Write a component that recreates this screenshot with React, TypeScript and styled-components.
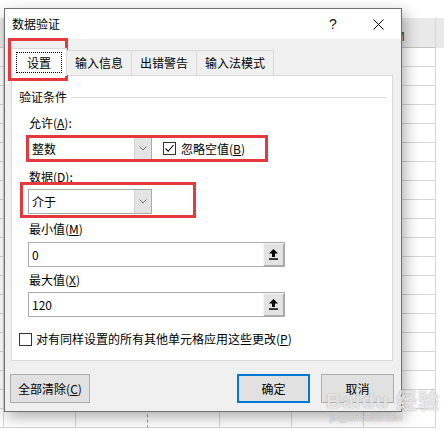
import React from "react";
import styled, { createGlobalStyle } from "styled-components";

const GlobalStyle = createGlobalStyle`
  html, body { margin: 0; padding: 0; background: #fff; }
  body {
    font-family: "Noto Sans CJK SC", "Microsoft YaHei", sans-serif;
    font-size: 12px;
    color: #000;
  }
  * { box-sizing: border-box; }
`;

const Screen = styled.div`
  position: relative;
  width: 444px;
  height: 431px;
  overflow: hidden;
  background: #fff;
`;

/* ---------- spreadsheet behind the dialog ---------- */
const Sheet = styled.div`
  padding-top: 18px;
  display: flex;
  flex-direction: column;
`;

const SheetRow = styled.div<{ $header?: boolean }>`
  display: grid;
  grid-template-columns: repeat(7, 72px);
  margin-left: -68px;
  height: ${(p) => (p.$header ? "30px" : "19px")};
  background: ${(p) => (p.$header ? "#e9e9e9" : "#fff")};
`;

const Cell = styled.div<{ $header?: boolean; $dashed?: boolean }>`
  border-right: 1px ${(p) => (p.$dashed ? "dashed #9a9a9a" : "solid #d6d6d6")};
  border-bottom: 1px solid ${(p) => (p.$header ? "#c4c4c4" : "#d6d6d6")};
  display: flex;
  align-items: flex-end;
  justify-content: center;
  padding-bottom: 3px;
  font: 13px "Liberation Sans", Arial, sans-serif;
  color: #444;
`;

/* ---------- dialog window ---------- */
const Dialog = styled.div`
  position: absolute;
  left: 4px;
  top: 8px;
  width: 398px;
  height: 404px;
  border: 1px solid #707070;
  background: #f0f0f0;
  box-shadow: 3px 5px 14px rgba(0, 0, 0, 0.32);
  display: flex;
  flex-direction: column;
`;

const TitleBar = styled.div`
  height: 30px;
  background: #fff;
  display: flex;
  align-items: center;
  padding-left: 7px;
`;

const Title = styled.div`
  flex: 1;
  font-size: 12px;
  line-height: 16px;
`;

const HelpButton = styled.div`
  width: 30px;
  margin-right: 7px;
  text-align: center;
  font: 14px "Liberation Sans", Arial, sans-serif;
  color: #111;
`;

const CloseButton = styled.div`
  width: 46px;
  height: 30px;
  display: flex;
  align-items: center;
  justify-content: center;
`;

const Body = styled.div`
  flex: 1;
  display: flex;
  flex-direction: column;
  padding: 9px 0 0 6px;
`;

const TabStrip = styled.div`
  display: flex;
  align-items: flex-end;
  height: 28px;
  position: relative;
  z-index: 1;
  margin-bottom: -1px;
`;

const Tab = styled.div<{ $active?: boolean }>`
  height: ${(p) => (p.$active ? "28px" : "25px")};
  margin-bottom: ${(p) => (p.$active ? "0" : "1px")};
  margin-left: -1px;
  border: 1px solid #d9d9d9;
  border-bottom: none;
  background: ${(p) => (p.$active ? "#fff" : "#f0f0f0")};
  padding: ${(p) => (p.$active ? "3px 4px 0 4px" : "0 8px")};
  line-height: 23px;
  font-size: 12px;
  &:first-child { margin-left: 0; }
`;

const FocusRect = styled.div`
  border: 1px dotted #000;
  height: 21px;
  padding: 0 10px;
  line-height: 19px;
`;

const Panel = styled.div`
  width: 382px;
  height: 286px;
  background: #fff;
  border: 1px solid #d9d9d9;
  padding: 13px 0 0 7px;
  display: flex;
  flex-direction: column;
`;

const GroupHeader = styled.div`
  display: flex;
  align-items: center;
  height: 16px;
  line-height: 16px;
`;

const GroupLine = styled.div`
  flex: 1;
  height: 1px;
  background: #dcdcdc;
  margin: 0 6px 0 4px;
`;

const Fields = styled.div`
  display: flex;
  flex-direction: column;
  padding-left: 9px;
`;

const FieldLabel = styled.div<{ $mt: number }>`
  margin-top: ${(p) => p.$mt}px;
  height: 16px;
  line-height: 16px;
  padding-left: 1px;
`;

const Row = styled.div<{ $mt: number }>`
  margin-top: ${(p) => p.$mt}px;
  display: flex;
  align-items: center;
`;

const Combo = styled.div`
  width: 124px;
  height: 25px;
  border: 1px solid #ababab;
  background: #fff;
  display: flex;
`;

const ComboText = styled.div`
  flex: 1;
  padding-left: 3px;
  line-height: 23px;
`;

const DropButton = styled.div`
  width: 17px;
  background: #e4e4e4;
  border-left: 1px solid #d0d0d0;
  display: flex;
  align-items: center;
  justify-content: center;
`;

const CheckItem = styled.div<{ $ml: number }>`
  margin-left: ${(p) => p.$ml}px;
  display: flex;
  align-items: center;
  gap: 5px;
  line-height: 16px;
`;

const CheckBox = styled.div`
  width: 13px;
  height: 13px;
  border: 1px solid #333;
  background: #fff;
  display: flex;
  align-items: center;
  justify-content: center;
`;

const CheckText = styled.span`
  white-space: nowrap;
`;

const RangeInput = styled.div`
  width: 257px;
  height: 25px;
  border: 1px solid #ababab;
  background: #fff;
  display: flex;
`;

const InputText = styled.div`
  flex: 1;
  padding-left: 3px;
  line-height: 23px;
`;

const RangeButton = styled.div`
  width: 21px;
  background: #e3e3e3;
  box-shadow: inset 1px 1px #f4f4f4, inset -1px -1px #a9a9a9;
  display: flex;
  align-items: center;
  justify-content: center;
`;

const BottomCheck = styled.div`
  margin-top: 14px;
  display: flex;
  align-items: center;
  gap: 4px;
  line-height: 16px;
`;

const ButtonRow = styled.div`
  margin-top: 13px;
  margin-left: -1px;
  padding-right: 7px;
  display: flex;
  justify-content: space-between;
`;

const ButtonGroup = styled.div`
  display: flex;
  gap: 11px;
`;

const Button = styled.div<{ $w: number; $primary?: boolean }>`
  width: ${(p) => p.$w}px;
  height: 29px;
  background: #e1e1e1;
  border: ${(p) => (p.$primary ? "2px solid #0078d7" : "1px solid #adadad")};
  display: flex;
  align-items: center;
  justify-content: center;
  font-size: 12px;
`;

/* ---------- annotations over the picture ---------- */
const RedBox = styled.div`
  position: absolute;
  border: 3px solid #e5393f;
  pointer-events: none;
`;

const Watermark = styled.div`
  position: absolute;
  left: 326px;
  top: 389px;
  display: flex;
  flex-direction: column;
  align-items: flex-start;
  color: rgba(255, 255, 255, 0.7);
  text-shadow: 0 0 1px rgba(120, 120, 120, 0.5), 0 0 2px rgba(150, 150, 150, 0.3);
  pointer-events: none;
`;

const WatermarkMain = styled.div`
  font: bold 21px "Liberation Sans", Arial, "Noto Sans CJK SC", sans-serif;
  line-height: 24px;
  letter-spacing: 1px;
`;

const WatermarkSub = styled.div`
  font: 9px "Liberation Sans", Arial, sans-serif;
  line-height: 10px;
  margin-left: 4px;
  color: rgba(235, 235, 235, 0.8);
`;

const u = (c: string) => <u>{c}</u>;

const Chevron = () => (
  <svg width="8" height="5" viewBox="0 0 8 5">
    <polyline points="0.5,0.5 4,4 7.5,0.5" fill="none" stroke="#6b6b6b" strokeWidth="1" />
  </svg>
);

const RangeIcon = () => (
  <svg width="9" height="11" viewBox="0 0 9 11">
    <polygon points="4.5,0 0,4.5 3,4.5 3,8 6,8 6,4.5 9,4.5" fill="#000" />
    <rect x="0" y="9.3" width="9" height="1.5" fill="#000" />
  </svg>
);

const CheckMark = () => (
  <svg width="11" height="11" viewBox="0 0 11 11">
    <polyline points="1.5,5.5 4.2,8.3 9.5,2" fill="none" stroke="#000" strokeWidth="1.1" />
  </svg>
);

const CloseIcon = () => (
  <svg width="11" height="11" viewBox="0 0 11 11">
    <line x1="0.5" y1="0.5" x2="10.5" y2="10.5" stroke="#000" strokeWidth="1" />
    <line x1="10.5" y1="0.5" x2="0.5" y2="10.5" stroke="#000" strokeWidth="1" />
  </svg>
);

export default function App() {
  const cols = ["", "", "", "", "", "", "M"];
  return (
    <Screen>
      <GlobalStyle />
      <Sheet>
        <SheetRow $header>
          {cols.map((c, i) => (
            <Cell key={i} $header>
              {c}
            </Cell>
          ))}
        </SheetRow>
        {Array.from({ length: 20 }).map((_, r) => (
          <SheetRow key={r}>
            {cols.map((_, i) => (
              <Cell key={i} $dashed={i === 2} />
            ))}
          </SheetRow>
        ))}
      </Sheet>

      <Dialog>
        <TitleBar>
          <Title>数据验证</Title>
          <HelpButton>?</HelpButton>
          <CloseButton>
            <CloseIcon />
          </CloseButton>
        </TitleBar>
        <Body>
          <TabStrip>
            <Tab $active>
              <FocusRect>设置</FocusRect>
            </Tab>
            <Tab>输入信息</Tab>
            <Tab>出错警告</Tab>
            <Tab>输入法模式</Tab>
          </TabStrip>
          <Panel>
            <GroupHeader>
              验证条件
              <GroupLine />
            </GroupHeader>
            <Fields>
              <FieldLabel $mt={10}>允许({u("A")}):</FieldLabel>
              <Row $mt={5}>
                <Combo>
                  <ComboText>整数</ComboText>
                  <DropButton>
                    <Chevron />
                  </DropButton>
                </Combo>
                <CheckItem $ml={11}>
                  <CheckBox>
                    <CheckMark />
                  </CheckBox>
                  <CheckText>忽略空值({u("B")})</CheckText>
                </CheckItem>
              </Row>
              <FieldLabel $mt={8}>数据({u("D")}):</FieldLabel>
              <Row $mt={4}>
                <Combo>
                  <ComboText>介于</ComboText>
                  <DropButton>
                    <Chevron />
                  </DropButton>
                </Combo>
              </Row>
              <FieldLabel $mt={7}>最小值({u("M")})</FieldLabel>
              <Row $mt={5}>
                <RangeInput>
                  <InputText>0</InputText>
                  <RangeButton>
                    <RangeIcon />
                  </RangeButton>
                </RangeInput>
              </Row>
              <FieldLabel $mt={5}>最大值({u("X")})</FieldLabel>
              <Row $mt={4}>
                <RangeInput>
                  <InputText>120</InputText>
                  <RangeButton>
                    <RangeIcon />
                  </RangeButton>
                </RangeInput>
              </Row>
            </Fields>
            <BottomCheck>
              <CheckBox />
              <CheckText>对有同样设置的所有其他单元格应用这些更改({u("P")})</CheckText>
            </BottomCheck>
          </Panel>
          <ButtonRow>
            <Button $w={80}>
              <CheckText>全部清除({u("C")})</CheckText>
            </Button>
            <ButtonGroup>
              <Button $w={73} $primary>
                确定
              </Button>
              <Button $w={73}>取消</Button>
            </ButtonGroup>
          </ButtonRow>
        </Body>
      </Dialog>

      <RedBox style={{ left: 8, top: 38, width: 60, height: 43 }} />
      <RedBox style={{ left: 26, top: 135, width: 242, height: 27 }} />
      <RedBox style={{ left: 20, top: 182, width: 176, height: 36 }} />

      <Watermark>
        <WatermarkMain>Baidu 经验</WatermarkMain>
        <WatermarkSub>jingyan.baidu.com</WatermarkSub>
      </Watermark>
    </Screen>
  );
}
